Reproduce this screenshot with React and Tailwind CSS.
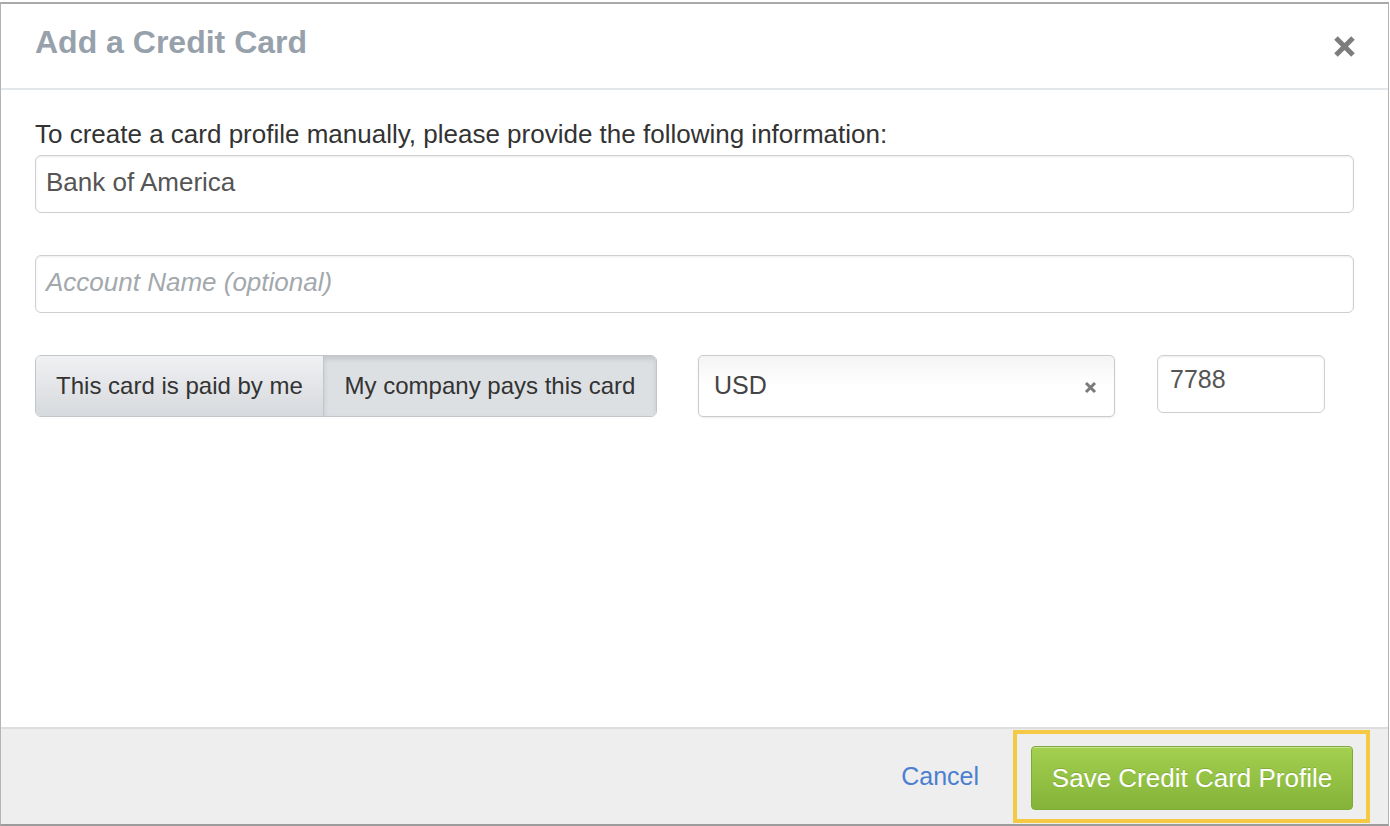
export default function App() {
  const font = { fontFamily: '"Liberation Sans", Arial, Helvetica, sans-serif' };
  return (
    <div className="w-[1390px] h-[826px] bg-white pt-[2px]" style={font}>
      <div className="w-[1389px] h-[824px] border-x border-t-2 border-b-2 border-x-[#b4b4b4] border-t-[#a9a9a9] border-b-[#9c9c9c] flex flex-col bg-white">
        {/* Header */}
        <div className="h-[86px] shrink-0 border-b-2 border-[#e3e7ea] flex items-start justify-between pl-[34px] pr-[32px] pt-[20px]">
          <div className="text-[32px] leading-[36px] font-bold text-[#97a1ab]">Add a Credit Card</div>
          <svg width="23" height="23" viewBox="0 0 23 23" className="mt-[11px]">
            <path d="M3 3 L20 20 M20 3 L3 20" stroke="#7d7d7d" strokeWidth="5" strokeLinecap="butt" />
          </svg>
        </div>

        {/* Body */}
        <div className="flex-1 pl-[34px] pr-[34px] pt-[29px]">
          <div className="text-[26px] leading-[30px] text-[#333333]">
            To create a card profile manually, please provide the following information:
          </div>
          <div className="mt-[6px] h-[58px] border border-[#cfcfcf] rounded-[6px] pt-[11px] px-[10px] text-[26px] leading-[30px] text-[#555555] shadow-[inset_0_1px_2px_rgba(0,0,0,0.08)]">
            Bank of America
          </div>
          <div className="mt-[42px] h-[58px] border border-[#cfcfcf] rounded-[6px] pt-[11px] px-[10px] text-[26px] leading-[30px] italic text-[#a3a8ad] shadow-[inset_0_1px_2px_rgba(0,0,0,0.08)]">
            Account Name (optional)
          </div>

          <div className="mt-[42px] flex items-start">
            <div className="flex h-[62px] w-[622px] border border-[#c2c6cb] rounded-[6px] overflow-hidden text-[24px] text-[#333333]">
              <div className="w-[288px] h-full flex items-center justify-center bg-gradient-to-b from-[#f0f1f3] to-[#d6d9dd] border-r border-[#c2c6cb]">
                This card is paid by me
              </div>
              <div className="flex-1 h-full flex items-center justify-center bg-[#dde0e3] shadow-[inset_0_3px_5px_rgba(0,0,0,0.12)]">
                My company pays this card
              </div>
            </div>

            <div className="ml-[41px] w-[417px] h-[62px] border border-[#cbcbcb] rounded-[5px] flex items-center justify-between pl-[15px] pr-[17px] text-[25px] text-[#444444] bg-gradient-to-b from-[#f4f4f4] via-white to-white shadow-[0_1px_2px_rgba(0,0,0,0.08)]">
              <span>USD</span>
              <svg width="13" height="13" viewBox="0 0 13 13" className="mt-[2px]">
                <path d="M2 2 L11 11 M11 2 L2 11" stroke="#7a7a7a" strokeWidth="3" />
              </svg>
            </div>

            <div className="ml-[42px] w-[168px] h-[58px] border border-[#cfcfcf] rounded-[6px] pt-[8px] px-[12px] text-[25px] leading-[30px] text-[#555555] shadow-[inset_0_1px_2px_rgba(0,0,0,0.08)]">
              7788
            </div>
          </div>
        </div>

        {/* Footer */}
        <div className="h-[97px] shrink-0 bg-[#eeeeee] border-t-2 border-[#dddddd] flex items-center justify-end pr-[18px]">
          <span className="text-[25px] text-[#4c7fcf] mr-[34px]">Cancel</span>
          <div className="w-[357px] h-[93px] border-[4px] border-[#f6c945] flex items-start pl-[14px] pt-[12px]">
            <div className="w-[322px] h-[64px] rounded-[4px] border border-[#7eab37] bg-gradient-to-b from-[#a3d04f] to-[#84b339] shadow-[inset_0_1px_0_rgba(255,255,255,0.45)] flex items-center justify-center text-[26px] text-white [text-shadow:0_-1px_0_rgba(0,0,0,0.15)]">
              Save Credit Card Profile
            </div>
          </div>
        </div>
      </div>
    </div>
  );
}
